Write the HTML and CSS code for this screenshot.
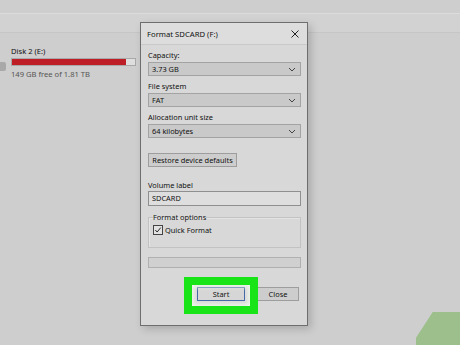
FILE: index.html
```html
<!DOCTYPE html>
<html lang="en">
<head>
    <meta charset="UTF-8">
    <title>Format SDCARD (F:)</title>
    <link rel="stylesheet" href="styles.css">
</head>
<body>
    <div class="topbar"></div>
    <div class="band"></div>

    <div class="drive">
        <div class="drive-icon"></div>
        <div class="drive-info">
            <div class="drive-name">Disk 2 (E:)</div>
            <div class="usage"><div class="usage-fill"></div></div>
            <div class="drive-free">149 GB free of 1.81 TB</div>
        </div>
    </div>

    <div class="dialog">
        <div class="title-bar">
            <span>Format SDCARD (F:)</span>
            <svg class="close" width="8" height="8" viewBox="0 0 8 8">
                <path d="M0.5 0.5L7.5 7.5M7.5 0.5L0.5 7.5" stroke="#222" stroke-width="1"/>
            </svg>
        </div>
        <div class="dialog-body">
            <label class="field-label first">Capacity:</label>
            <div class="select">
                <span>3.73 GB</span>
                <svg width="8" height="5" viewBox="0 0 8 5"><path d="M1 1L4 4L7 1" fill="none" stroke="#444" stroke-width="1"/></svg>
            </div>
            <label class="field-label">File system</label>
            <div class="select">
                <span>FAT</span>
                <svg width="8" height="5" viewBox="0 0 8 5"><path d="M1 1L4 4L7 1" fill="none" stroke="#444" stroke-width="1"/></svg>
            </div>
            <label class="field-label">Allocation unit size</label>
            <div class="select">
                <span>64 kilobytes</span>
                <svg width="8" height="5" viewBox="0 0 8 5"><path d="M1 1L4 4L7 1" fill="none" stroke="#444" stroke-width="1"/></svg>
            </div>

            <button class="btn restore">Restore device defaults</button>

            <label class="field-label volume">Volume label</label>
            <div class="textbox">SDCARD</div>

            <fieldset class="options">
                <legend>Format options</legend>
                <div class="check-row">
                    <span class="checkbox">
                        <svg width="8" height="8" viewBox="0 0 9 9"><path d="M1.5 4.5L3.5 6.8L7.6 1.8" fill="none" stroke="#222" stroke-width="1.1"/></svg>
                    </span>
                    <span>Quick Format</span>
                </div>
            </fieldset>

            <div class="progress"></div>

            <div class="actions">
                <button class="btn start">Start</button>
                <button class="btn close-btn">Close</button>
            </div>
        </div>
    </div>

    <div class="highlight"></div>
    <div class="corner"></div>
</body>
</html>
```

FILE: styles.css
```css
body {
    margin: 0;
    width: 460px;
    height: 345px;
    overflow: hidden;
    position: relative;
    background: #cecece;
    font-family: 'Noto Sans', sans-serif;
    font-size: 7.4px;
    color: #111;
}
.topbar {
    height: 13px;
    border-bottom: 1px solid #dcdcdc;
}
.band {
    height: 18px;
    background: #d2d2d2;
    border-bottom: 1px solid #c6c6c6;
}

/* drive tile on the left */
.drive {
    display: flex;
    gap: 5px;
    padding-top: 12px;
}
.drive-icon {
    width: 6px;
    height: 9px;
    margin-top: 17px;
    background: #a9a9a9;
    border-radius: 0 2px 2px 0;
}
.drive-name {
    line-height: 12px;
    margin-bottom: 1px;
    font-size: 7.6px;
}
.usage {
    width: 123px;
    height: 6px;
    background: #dedede;
    border: 1px solid #a8a8a8;
}
.usage-fill {
    width: 114px;
    height: 6px;
    background: #be1f27;
}
.drive-free {
    line-height: 12px;
    margin-top: 2px;
    color: #555;
    font-size: 7.6px;
}

/* format dialog window */
.dialog {
    position: absolute;
    left: 140px;
    top: 22px;
    width: 166px;
    height: 302px;
    background: #d8d8d8;
    border: 1px solid #6e6e6e;
    box-shadow: 3px 3px 8px rgba(0,0,0,0.18);
    display: flex;
    flex-direction: column;
}
.title-bar {
    height: 21px;
    display: flex;
    align-items: center;
    justify-content: space-between;
    padding: 0 8px 0 6px;
    background: #dddddd;
    border-bottom: 1px solid #c9c9c9;
    font-size: 7.7px;
}
.dialog-body {
    padding: 4px 6px 0 7px;
    display: flex;
    flex-direction: column;
}
.field-label {
    line-height: 12px;
    margin-top: 4px;
}
.field-label.first {
    margin-top: 0;
}
.select {
    margin-top: 1px;
    height: 12px;
    display: flex;
    align-items: center;
    justify-content: space-between;
    padding: 0 4px 0 3px;
    background: #c9c9c9;
    border: 1px solid #a3a3a3;
}
.btn {
    font-family: inherit;
    font-size: 7.4px;
    color: #111;
    background: #cdcdcd;
    border: 1px solid #9d9d9d;
    padding: 0;
    height: 14px;
    line-height: 12px;
    white-space: nowrap;
}
.restore {
    margin-top: 15px;
    width: 89px;
}
.field-label.volume {
    margin-top: 12px;
}
.textbox {
    height: 13px;
    line-height: 13px;
    padding-left: 3px;
    background: #dedede;
    border: 1px solid #8f8f8f;
}
.options {
    margin: 5px 0 0;
    padding: 2px 4px 0;
    height: 33px;
    border: 1px solid #c2c2c2;
    box-shadow: inset 1px 1px 0 #e4e4e4;
}
.options legend {
    padding: 0;
    line-height: 12px;
}
.check-row {
    display: flex;
    align-items: center;
    gap: 2px;
}
.checkbox {
    width: 8px;
    height: 8px;
    border: 1px solid #444;
    background: #e2e2e2;
    display: flex;
}
.progress {
    margin-top: 9px;
    height: 9px;
    background: #d0d0d0;
    border: 1px solid #b0b0b0;
}
.actions {
    margin-top: 19px;
    display: flex;
    justify-content: flex-end;
    gap: 12px;
    padding-right: 2px;
}
.start {
    width: 48px;
    border-color: #3a64a3;
    background: #d6d6d6;
}
.close-btn {
    width: 42px;
}

/* green callout around the Start button */
.highlight {
    position: absolute;
    left: 184px;
    top: 277px;
    width: 58px;
    height: 21px;
    border: 8px solid #18e418;
    box-shadow: inset 0 0 4px 2px #eef6ea;
}
.corner {
    position: absolute;
    left: 416px;
    top: 312px;
    width: 44px;
    height: 33px;
    background: #9dbf8b;
    clip-path: polygon(38% 0, 100% 0, 100% 100%, 0 100%, 0 78%);
}
```
